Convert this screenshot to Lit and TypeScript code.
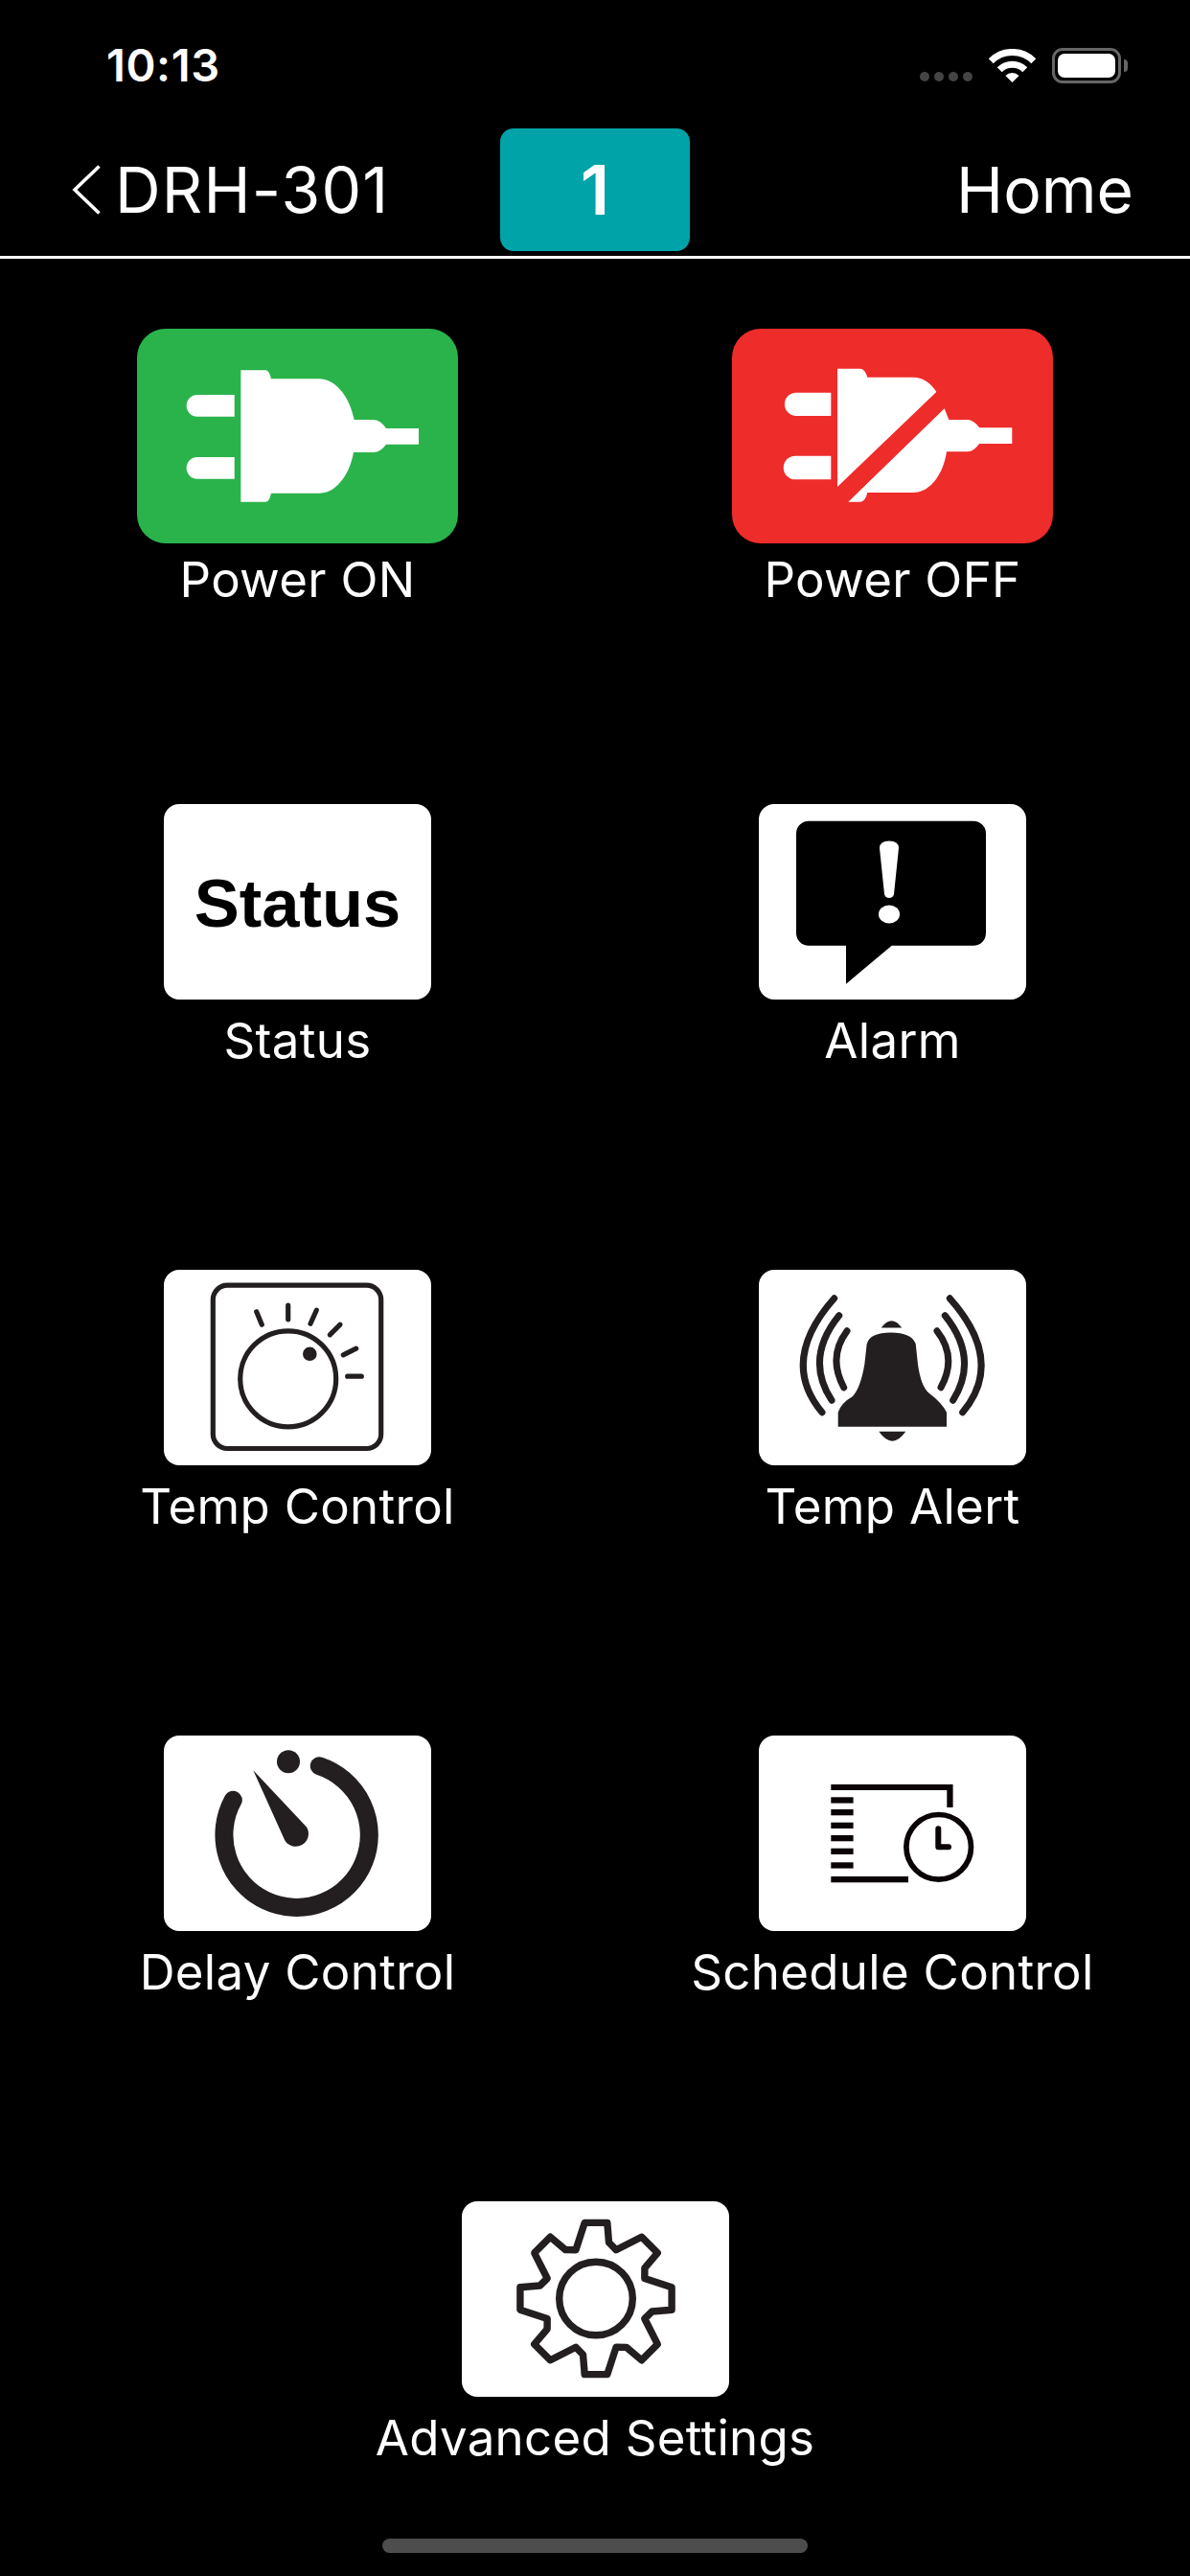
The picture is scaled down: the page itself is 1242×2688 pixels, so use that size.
import { LitElement, html, svg, css } from 'lit';
import { customElement } from 'lit/decorators.js';

// gear outline comes from 8 teeth around the centre, in tile units
const gearPoints = () => {
  const cx = 140, cy = 101;
  const at = (deg: number, r: number) => {
    const a = (deg - 90) * Math.PI / 180;
    return `${(cx + r * Math.cos(a)).toFixed(1)},${(cy + r * Math.sin(a)).toFixed(1)}`;
  };
  const pts: string[] = [];
  for (let i = 0; i < 8; i++) {
    const a = i * 45;
    pts.push(at(a - 8.5, 80), at(a + 8.5, 80), at(a + 13, 60), at(a + 22.5, 55));
  }
  return pts.join(' ');
};

const icons = {
  on: svg`<svg viewBox="0 0 335 224" fill="#fff">
    <path d="M63 69H101.7V91.7H63a11.3 11.3 0 0 1 0-22.7Z"/>
    <path d="M63 134H101.7V156.7H63a11.3 11.3 0 0 1 0-22.7Z"/>
    <path d="M108.3 43.3H134Q138 43.3 140 52.3H190C208 52.3 222 72 226.7 95H246.7Q254 95 260 104H294V120.7H260Q254 129 246.7 129H226C222 152 208 171.7 190 171.7H140Q138 180.7 134 180.7H108.3Z"/>
  </svg>`,
  off: svg`<svg viewBox="0 0 335 224" fill="#fff">
    <path d="M66 66.7H103.3V91H66a12.2 12.2 0 0 1 0-24.3Z"/>
    <path d="M66 132.7H103.3V157.3H66a12.3 12.3 0 0 1 0-24.6Z"/>
    <path d="M110 41.7H134Q139 42 141.3 50.7H189Q204 51 213.3 66L110 165Z"/>
    <path d="M221.7 83.3L226.3 95H245.7Q252 95 258.3 103.3H292.3V120H258.3Q252 128.3 245.7 128.3H224C221 150 208 171 189 171H141.3Q139 180.7 134 180.7H121.3Z"/>
  </svg>`,
  alarm: svg`<svg viewBox="0 0 279 204">
    <path d="M52 17.7H224a13 13 0 0 1 13 13V134.7a13 13 0 0 1-13 13H138.7L91 187.7V147.7H52a13 13 0 0 1-13-13V30.7a13 13 0 0 1 13-13Z" fill="#000"/>
    <path d="M126 46Q126 38.5 136 38.5T146 46L141 94Q140 98 136 98T131 94Z" fill="#fff"/>
    <ellipse cx="136" cy="115" rx="11" ry="9.5" fill="#fff"/>
  </svg>`,
  temp: svg`<svg viewBox="0 0 279 203" fill="none" stroke="#231f20" stroke-width="5.2" stroke-linecap="round">
    <rect x="51.3" y="15.7" width="175.4" height="170.3" rx="15"/>
    <circle cx="129.7" cy="113.3" r="50"/>
    <circle cx="152.3" cy="87.3" r="7.3" fill="#231f20" stroke="none"/>
    <path d="M96.7 43.3L102.3 56.7M129.7 36.7V51.3M159.3 41.7L153 55.7M184 56.7L173.3 67.3M200.7 81.7L187.3 88.3M206.3 110.7H191.7"/>
  </svg>`,
  bell: svg`<svg viewBox="0 0 279 203" fill="#231f20">
    <path d="M82.7 163.3H196V148.3Q191 138.3 177.7 128.3Q169.3 121.7 166 98.3L163.7 76.7Q159.3 65 137.7 65Q116 65 112.7 76.7L110.3 98.3Q106 123.3 97.7 131.7Q86 138.3 82.7 148.3Z"/>
    <path d="M127.7 60Q138.5 45.4 149.3 60Z"/>
    <path d="M125.3 168.3H153.3Q139.3 188 125.3 168.3Z"/>
    <path fill="none" stroke="#231f20" stroke-width="7" stroke-linecap="round" d="M78.7 29.3Q21 94.6 66 148.3M83.7 47.3Q47.5 91.9 76 135.7M92 63.3Q71.6 90.6 88.7 122.3M199.3 29.3Q257.4 94.6 212.7 148.3M194.3 47.3Q230.1 91.9 202.7 135.7M186 63.3Q207.4 90.6 190 122.3"/>
  </svg>`,
  delay: svg`<svg viewBox="0 0 279 203" fill="#231f20">
    <path d="M72.3 66.7A75.7 75.7 0 1 0 162.3 31.3" fill="none" stroke="#231f20" stroke-width="19" stroke-linecap="round"/>
    <circle cx="130" cy="26.7" r="12"/>
    <path d="M93.3 35.7L149 95A13.3 13.3 0 1 1 126.3 109Z"/>
  </svg>`,
  schedule: svg`<svg viewBox="0 0 279 204" fill="#0a0406">
    <path d="M75.3 51H202.6V75H196.3V57H75.3Z"/>
    <rect x="75.3" y="64.3" width="23.3" height="6.3"/>
    <rect x="75.3" y="77" width="23.3" height="6.3"/>
    <rect x="75.3" y="90.7" width="23.3" height="6.3"/>
    <rect x="75.3" y="104" width="23.3" height="6.3"/>
    <rect x="75.3" y="117.7" width="23.3" height="6.3"/>
    <rect x="75.3" y="132.3" width="23.3" height="6.3"/>
    <rect x="75.3" y="147" width="80.7" height="6.3"/>
    <circle cx="187.7" cy="116.3" r="33.8" fill="none" stroke="#0a0406" stroke-width="5.7"/>
    <path d="M187.3 97.3V116.3H198" fill="none" stroke="#0a0406" stroke-width="6" stroke-linecap="round" stroke-linejoin="round"/>
  </svg>`,
  gear: svg`<svg viewBox="0 0 279 203" fill="none" stroke="#231f20" stroke-width="7.4">
    <polygon points=${gearPoints()} stroke-linejoin="round"/>
    <circle cx="140" cy="101" r="38.3"/>
  </svg>`,
};

@customElement('app-root')
export class AppRoot extends LitElement {
  items = [
    { label: 'Power ON', tile: 'power green', icon: icons.on },
    { label: 'Power OFF', tile: 'power red', icon: icons.off },
    { label: 'Status', tile: '', text: 'Status' },
    { label: 'Alarm', tile: '', icon: icons.alarm },
    { label: 'Temp Control', tile: '', icon: icons.temp },
    { label: 'Temp Alert', tile: '', icon: icons.bell },
    { label: 'Delay Control', tile: '', icon: icons.delay },
    { label: 'Schedule Control', tile: '', icon: icons.schedule },
    { label: 'Advanced Settings', tile: '', icon: icons.gear, wide: true },
  ];

  render() {
    return html`
      <div class="status">
        <span class="time">10:13</span>
        <div class="indicators">
          <div class="dots"><i></i><i></i><i></i><i></i></div>
          <svg class="wifi" viewBox="0 0 49 35" fill="none" stroke="#fff" stroke-width="7">
            <path d="M2.2 12.7A31.5 31.5 0 0 1 46.8 12.7"/>
            <path d="M11.2 21.7A18.8 18.8 0 0 1 37.8 21.7"/>
            <path d="M17.4 27.9A10 10 0 0 1 31.6 27.9L24.5 35Z" fill="#fff" stroke="none"/>
          </svg>
          <div class="battery"><b></b></div>
          <span class="cap"></span>
        </div>
      </div>
      <div class="nav">
        <div class="back">
          <svg viewBox="0 0 30 52" fill="none" stroke="#fff" stroke-width="3.6">
            <path d="M28.5 1.5L3 26L28.5 50.5"/>
          </svg>
          <span>DRH-301</span>
        </div>
        <div class="unit">1</div>
        <div class="home">Home</div>
      </div>
      <div class="grid">
        ${this.items.map((it) => html`
          <div class="item ${it.wide ? 'wide' : ''}">
            <div class="tile ${it.tile}">
              ${it.text ? html`<span class="tile-text">${it.text}</span>` : it.icon}
            </div>
            <div class="label">${it.label}</div>
          </div>
        `)}
      </div>
      <div class="indicator"></div>
    `;
  }

  static styles = css`
    * {
      margin: 0;
      padding: 0;
      box-sizing: border-box;
    }
    :host {
      display: block;
      width: 1242px;
      height: 2688px;
      background: #000;
      color: #fff;
      font-family: Inter, 'Liberation Sans', sans-serif;
      overflow: hidden;
    }
    .status {
      height: 134px;
      padding: 40px 65px 0 111px;
      display: flex;
      justify-content: space-between;
      align-items: flex-start;
    }
    .time {
      font-size: 47px;
      font-weight: 600;
      line-height: 56px;
      letter-spacing: 0.6px;
    }
    .indicators {
      height: 56px;
      display: flex;
      align-items: center;
    }
    .dots {
      display: flex;
      gap: 5px;
      align-self: flex-end;
      margin: 0 17px 11px 0;
    }
    .dots i {
      width: 10px;
      height: 10px;
      border-radius: 50%;
      background: #444;
    }
    .wifi {
      width: 49px;
      height: 35px;
      margin-right: 17px;
    }
    .battery {
      width: 72px;
      height: 37px;
      padding: 3px;
      border: 3px solid #666;
      border-radius: 11px;
    }
    .battery b {
      display: block;
      height: 100%;
      background: #fff;
      border-radius: 7px;
    }
    .cap {
      width: 4px;
      height: 13px;
      margin-left: 3px;
      background: #666;
      border-radius: 0 4px 4px 0;
    }
    .nav {
      height: 136px;
      padding-bottom: 5px;
      border-bottom: 3px solid #fff;
      display: grid;
      grid-template-columns: 1fr 198px 1fr;
      align-items: center;
      font-size: 66px;
      line-height: 80px;
    }
    .back {
      padding-left: 75px;
      display: flex;
      align-items: center;
      gap: 15px;
      letter-spacing: 1.2px;
    }
    .back svg {
      width: 30px;
      height: 52px;
    }
    .unit {
      height: 128px;
      border-radius: 14px;
      background: #00a3a8;
      font-size: 72px;
      font-weight: 600;
      line-height: 128px;
      text-align: center;
    }
    .home {
      padding-right: 59px;
      text-align: right;
    }
    .grid {
      padding-top: 73px;
      display: grid;
      grid-template-columns: 621px 621px;
      grid-template-rows: 496px 486px 486px 486px 352px;
    }
    .item {
      display: flex;
      flex-direction: column;
      align-items: center;
    }
    .item.wide {
      grid-column: 1 / 3;
    }
    .tile {
      width: 279px;
      height: 204px;
      border-radius: 16px;
      background: #fff;
      display: flex;
      align-items: center;
      justify-content: center;
    }
    .tile.power {
      width: 335px;
      height: 224px;
      border-radius: 30px;
    }
    .tile.green {
      background: #2bb34b;
    }
    .tile.red {
      background: #ee2c2a;
    }
    .tile svg {
      width: 100%;
      height: 100%;
      display: block;
      filter: blur(0.5px);
    }
    .tile-text {
      padding-top: 3px;
      color: #000;
      font-family: 'Liberation Sans', Arial, sans-serif;
      font-size: 70.5px;
      font-weight: 700;
      line-height: 80px;
    }
    .label {
      margin-top: 13px;
      font-size: 51px;
      line-height: 60px;
      letter-spacing: 0.3px;
      white-space: nowrap;
    }
    .tile.power + .label {
      margin-top: 8px;
    }
    .indicator {
      width: 444px;
      height: 15px;
      margin: 0 auto;
      border-radius: 8px;
      background: #4d4d4d;
    }
  `;
}
